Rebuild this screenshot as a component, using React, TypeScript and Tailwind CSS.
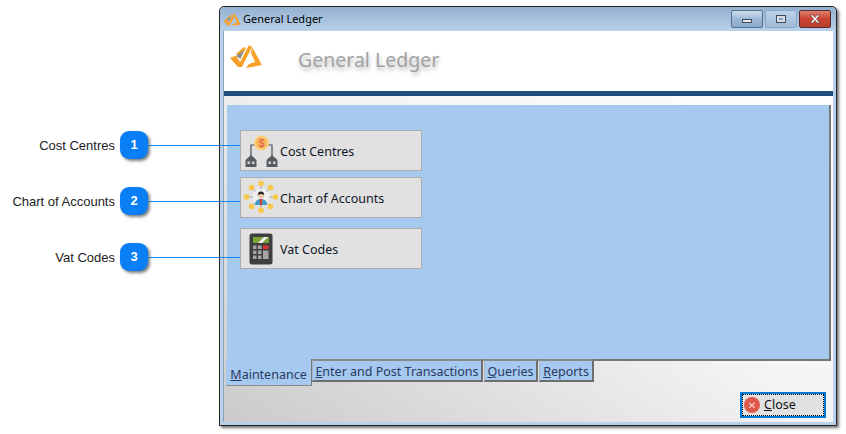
import React from "react";

const tahoma = "font-['Noto_Sans','DejaVu_Sans',sans-serif]";

function Logo({ className }: { className: string }) {
  return (
    <svg viewBox="0 0 32 24" className={className}>
      <path d="M0 14 L6 11.500 L10 18 L19 1 L22 3 L12 23 L8 23 Z" fill="#f7a128" />
      <path d="M6 10 L14 3 L16 4 L11 13 Z" fill="#f7a128" />
      <path d="M6 12 L14 6 L10.500 15 Z" fill="#8f8f8f" />
      <path d="M22 3 L32 21 L16 24 L19 20 L25 18 L21 9 Z" fill="#f7a128" />
    </svg>
  );
}

function Callout({ n, label }: { n: number; label: string }) {
  return (
    <div className="relative flex items-center justify-end h-7 mb-7 pr-[71px]">
      <span className="font-['Liberation_Sans',sans-serif] text-[13px] text-[#222] mr-[5px] pt-px whitespace-nowrap">{label}</span>
      <div className="flex items-center justify-center w-7 h-7 rounded-[9px] bg-[#0a7ff5] text-white font-bold text-[13px] font-['Liberation_Sans',sans-serif] shadow-[2px_2px_3px_rgba(0,0,0,0.5)]">
        {n}
      </div>
      <div className="absolute left-[148px] top-[14px] w-[92px] h-px bg-[#1787ee] z-10" />
    </div>
  );
}

function CostIcon() {
  return (
    <svg viewBox="0 0 34 34" className="w-[34px] h-[34px]">
      <path d="M7 24 V11 H15 M28 24 V11 H19" fill="none" stroke="#4a5156" strokeWidth="1.2" />
      <circle cx="17.500" cy="9" r="7.500" fill="#fbcf7c" />
      <circle cx="17.500" cy="9" r="5.500" fill="#f9b75a" />
      <text x="17.500" y="12.500" textAnchor="middle" fontSize="10" fill="#e0524b" fontFamily="Liberation Sans">$</text>
      <path d="M7 21 L12.500 26 V33 H1.500 V26 Z M28 21 L33.500 26 V33 H22.500 V26 Z" fill="#565d62" />
      <path d="M3.500 27.500h2.500v2.500h-2.500z M8 27.500h2.500v2.500H8z M24.500 27.500h2.500v2.500h-2.500z M29 27.500h2.500v2.500H29z" fill="#cfd3d6" />
    </svg>
  );
}

function ChartIcon() {
  const dots = [[17,2.500],[7.500,6.500],[26.500,6.500],[2.500,16],[31.500,16],[7.500,25.500],[26.500,25.500],[17,29.500]];
  return (
    <svg viewBox="0 0 34 34" className="w-[34px] h-[34px]">
      <circle cx="17" cy="16" r="9" fill="#eef0f0" />
      {dots.map(([x, y], i) => (
        <g key={i}>
          <line x1={x} y1={y} x2={17 + (x - 17) * 0.55} y2={16 + (y - 16) * 0.55} stroke="#8d9aa3" strokeWidth="0.8" />
          <circle cx={x} cy={y} r="2.800" fill="#fbc748" />
        </g>
      ))}
      <path d="M11 24 Q11 18 17 18 Q23 18 23 24 Z" fill="#3d9cc4" />
      <path d="M15.500 18 H18.500 L17.700 24.500 H16.300 Z" fill="#e03b3b" />
      <circle cx="17" cy="14" r="3.200" fill="#f1c6a4" />
      <path d="M13.800 14 Q13.800 10.500 17 10.500 Q20.200 10.500 20.200 14 Q17 12 13.800 14Z" fill="#222" />
    </svg>
  );
}

function CalcIcon() {
  const keys = [[7,14],[12,14],[7,19],[12,19],[7,24],[12,24]];
  return (
    <svg viewBox="0 0 24 32" className="w-[24px] h-[32px]">
      <rect x="0.500" y="0.500" width="23" height="31" rx="2.500" fill="#3f3f3f" />
      <rect x="4" y="4" width="16" height="6" fill="#7da13b" />
      <path d="M9 10 L15 4 H19 L13 10 Z" fill="#f2f2f2" />
      {keys.map(([x, y], i) => (
        <rect key={i} x={x - 3} y={y - 1.500} width="3.500" height="3.500" fill="#a5a5a5" />
      ))}
      <rect x="14" y="12.500" width="5.500" height="3.500" fill="#e4332f" />
      <rect x="14" y="17.500" width="5.500" height="8.500" fill="#a5a5a5" />
    </svg>
  );
}

function MenuButton({ icon, label, className }: { icon: React.ReactNode; label: string; className: string }) {
  return (
    <div className={`flex items-center w-[182px] bg-[#e1e1e1] border border-[#adadad] ${className}`}>
      <div className="flex items-center justify-center w-[39px] shrink-0">{icon}</div>
      <span className="text-[12.5px] text-[#10182a] pt-[3px]">{label}</span>
    </div>
  );
}

function Tab({ first, rest, w }: { first: string; rest: string; w: string }) {
  return (
    <div className={`flex justify-center items-center pt-[4px] h-[23px] bg-[#a6c9f0] border-l border-t-2 border-r-2 border-b-2 border-l-[#a9b4c2] border-t-[#8a8a8a] border-r-[#6e6e6e] border-b-[#6e6e6e] rounded-tr-[2px] text-[12.5px] text-[#2a3a60] ${w}`}>
      <span><span className="underline">{first}</span>{rest}</span>
    </div>
  );
}

export default function App() {
  return (
    <div className={`flex items-start w-[846px] h-[434px] bg-white overflow-hidden ${tahoma}`}>
      <div className="w-[219px] pt-[131px] shrink-0">
        <Callout n={1} label="Cost Centres" />
        <Callout n={2} label="Chart of Accounts" />
        <Callout n={3} label="Vat Codes" />
      </div>

      <div className="mt-[6px] w-[618px] h-[420px] flex flex-col rounded-t-[5px] border border-[#222] bg-[#b9d1ea] shadow-[2px_2px_3px_rgba(0,0,0,0.55)] px-[3px] pb-[3px]">
        <div className="flex items-center h-[24px] shrink-0 -mx-[3px] px-[3px] rounded-t-[5px] bg-linear-to-b from-[#94b1d0] to-[#b9d1ea]">
          <Logo className="w-[18px] h-[13px] mr-[2px]" />
          <span className="text-[11px] text-black">General Ledger</span>
          <div className="ml-auto flex gap-[2px] items-start self-start mt-[3px] mr-[2px]">
            <div className="flex items-end justify-center pb-[4px] w-[32px] h-[18px] rounded-[2px] border border-[#56708e] bg-linear-to-b from-[#cddff0] via-[#9db8d5] to-[#8aa9cb]">
              <div className="w-[10px] h-[4px] bg-[#e8e8ee] border border-[#3f4a5a]" />
            </div>
            <div className="flex items-center justify-center w-[32px] h-[18px] rounded-[2px] border border-[#8ba8c6] bg-linear-to-b from-[#bcd2e8] to-[#a0bcd9]">
              <div className="flex items-center justify-center w-[10px] h-[8px] bg-[#d8dde4] border border-[#3f4a5a]">
                <div className="w-[4px] h-[2px] bg-[#7f9fc0]" />
              </div>
            </div>
            <div className="flex items-center justify-center w-[32px] h-[18px] rounded-[2px] border border-[#5a2a2a] bg-linear-to-b from-[#dc8070] via-[#c9412f] to-[#b9402f]">
              <svg viewBox="0 0 14 10" className="w-[14px] h-[10px]">
                <path d="M2 1 H5 L7 3.500 L9 1 H12 L8.500 5 L12 9 H9 L7 6.500 L5 9 H2 L5.500 5 Z" fill="#f4f4f4" stroke="#5a3030" strokeWidth="0.6" />
              </svg>
            </div>
          </div>
        </div>

        <div className="flex-1 flex flex-col min-h-0 border-l border-[#8f9fb0] bg-linear-to-tr from-[#cbcbcb] via-[#f4f4f4] to-white">
          <div className="flex items-center h-[60px] bg-white shrink-0">
            <Logo className="w-[32px] h-[24px] ml-[6px] -mt-[11px]" />
            <span className="ml-[36px] -mt-[3px] text-[19.5px] text-[#a3a3a3] [text-shadow:1px_3px_4px_rgba(0,0,0,0.3)]">General Ledger</span>
          </div>
          <div className="h-[5px] bg-[#1f4e7e] shrink-0" />

          <div className="mt-[9px] ml-[3px] mr-[2px] h-[256px] pt-[25px] pl-[13px] bg-[#a6c9f0] border-r-2 border-b-2 border-[#777] shrink-0 flex flex-col">
            <MenuButton icon={<CostIcon />} label="Cost Centres" className="h-[41px]" />
            <MenuButton icon={<ChartIcon />} label="Chart of Accounts" className="h-[41px] mt-[6px]" />
            <MenuButton icon={<CalcIcon />} label="Vat Codes" className="h-[41px] mt-[10px]" />
          </div>

          <div className="flex items-start ml-[2px]">
            <div className="relative -mt-[2px] flex justify-center items-end pt-[3px] w-[86px] h-[27px] bg-[#a6c9f0] border-b border-r border-b-[#8a8a8a] border-r-[#777] text-[12.5px] text-[#2a3a60]">
              <span><span className="underline">M</span>aintenance</span>
            </div>
            <div className="flex items-start -mt-[2px]">
              <Tab first="E" rest="nter and Post Transactions" w="w-[171px]" />
              <Tab first="Q" rest="ueries" w="w-[54px] ml-px" />
              <Tab first="R" rest="eports" w="w-[55px] ml-px" />
            </div>
          </div>

          <div className="flex justify-end mt-[6px] mr-[7px]">
            <div className="flex items-center w-[86px] h-[26px] bg-[#e1e1e1] border-2 border-[#0078d7] outline-1 outline-dotted outline-black -outline-offset-3 pl-[2px]">
              <div className="flex items-center justify-center w-[16px] h-[16px] rounded-full bg-[#e0584c] text-[#f8d8d4] text-[10px] leading-none">✕</div>
              <span className="ml-[4px] text-[12.5px] text-[#111]"><span className="underline">C</span>lose</span>
            </div>
          </div>
        </div>
      </div>
    </div>
  );
}
